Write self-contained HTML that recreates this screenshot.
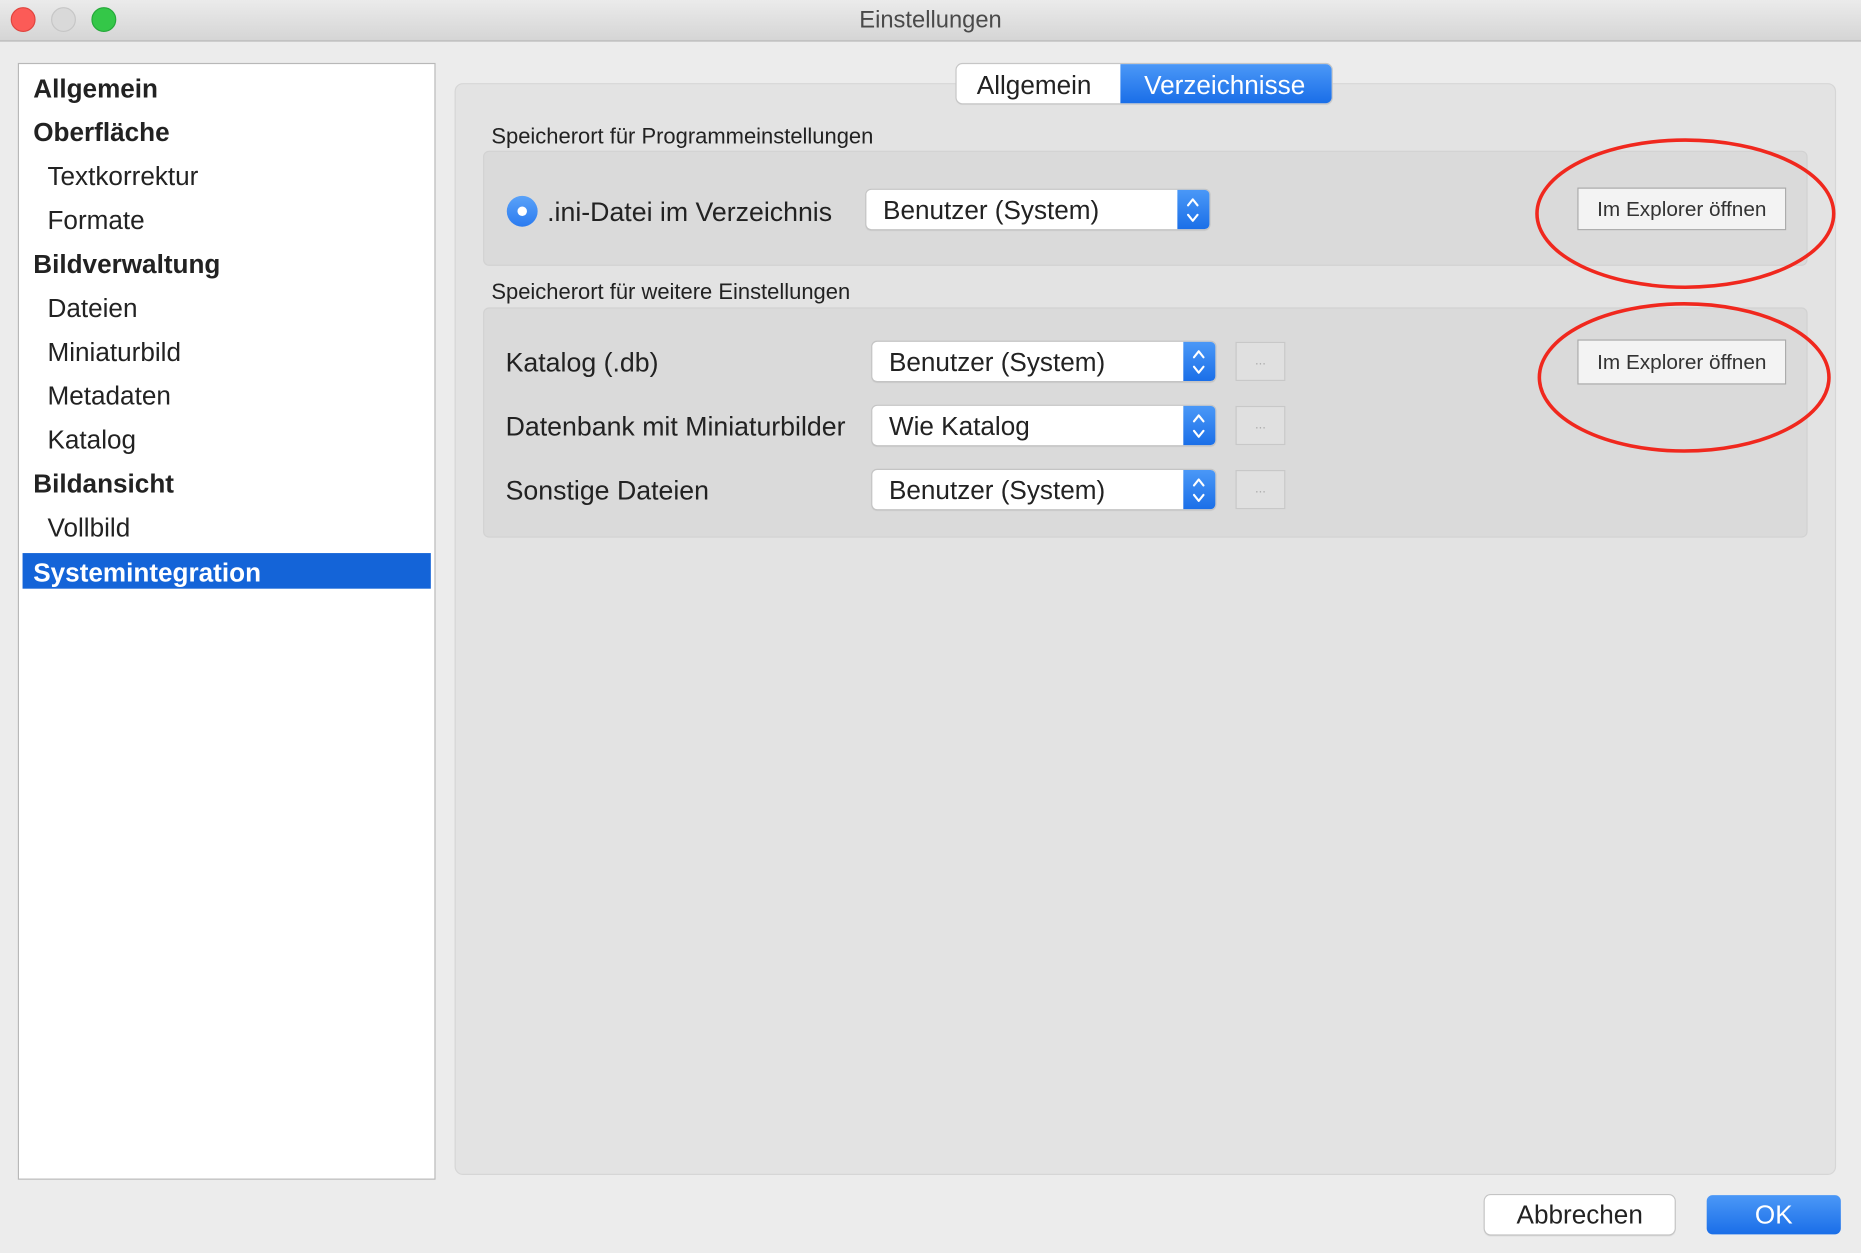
<!DOCTYPE html>
<html><head><meta charset="utf-8"><style>
html,body{margin:0;padding:0;width:1861px;height:1253px;overflow:hidden;background:#ececec;}
#w{position:absolute;left:0;top:0;width:1568px;height:1056px;transform:scale(1.18686);transform-origin:0 0;font-family:"Liberation Sans",sans-serif;color:#222;}
.a{position:absolute;}
.t{position:absolute;white-space:nowrap;line-height:1;}
.side .t{font-size:22px;}
.b{font-weight:bold;}
.combo{position:absolute;background:#fff;border-radius:4px;box-shadow:0 0 0 1px #c4c4c4,0 1px 1px rgba(0,0,0,.15);}
.combo span{position:absolute;left:14px;top:50%;transform:translateY(-48%);font-size:22px;white-space:nowrap;}
.step{position:absolute;right:0;top:0;bottom:0;width:27px;background:linear-gradient(#4a98f7,#1b6fe8);border-radius:0 4px 4px 0;}
.dots{position:absolute;width:42px;height:33px;background:#e0e0e0;border:1px solid #c8c8c8;box-sizing:border-box;color:#aaa;font-size:11px;text-align:center;line-height:30px;}
.btn{position:absolute;background:#f3f3f3;border:1.5px solid #a9a9a9;box-sizing:border-box;font-size:17.5px;text-align:center;color:#333;}
</style></head><body><div id="w">
<div class="a" style="left:0;top:0;width:1568px;height:34px;background:linear-gradient(#ebebeb,#d5d5d5);border-bottom:1px solid #b3b3b3;"></div>
<div class="a" style="left:9px;top:6px;width:21px;height:21px;border-radius:50%;background:#fc5b57;border:1px solid #e0443e;box-sizing:border-box;"></div>
<div class="a" style="left:43px;top:6px;width:21px;height:21px;border-radius:50%;background:#d9d9d9;border:1px solid #c6c6c6;box-sizing:border-box"></div>
<div class="a" style="left:77px;top:6px;width:21px;height:21px;border-radius:50%;background:#34c748;border:1px solid #25a93a;box-sizing:border-box"></div>
<div class="t" style="left:0;width:1568px;text-align:center;top:7px;font-size:20px;color:#4a4a4a;">Einstellungen</div>

<div class="a side" style="left:15px;top:53px;width:352px;height:941px;background:#fff;border:1px solid #b8b8b8;box-sizing:border-box;">
<div class="a" style="left:3px;top:412px;width:344px;height:30px;background:#1464d8;"></div>
<div class="t b" style="left:12px;top:10px;">Allgemein</div>
<div class="t b" style="left:12px;top:47px;">Oberfläche</div>
<div class="t" style="left:24px;top:84px;">Textkorrektur</div>
<div class="t" style="left:24px;top:121px;">Formate</div>
<div class="t b" style="left:12px;top:158px;">Bildverwaltung</div>
<div class="t" style="left:24px;top:195px;">Dateien</div>
<div class="t" style="left:24px;top:232px;">Miniaturbild</div>
<div class="t" style="left:24px;top:269px;">Metadaten</div>
<div class="t" style="left:24px;top:306px;">Katalog</div>
<div class="t b" style="left:12px;top:343px;">Bildansicht</div>
<div class="t" style="left:24px;top:380px;">Vollbild</div>
<div class="t b" style="left:12px;top:418px;color:#fff;">Systemintegration</div>
</div>

<div class="a" style="left:383px;top:70px;width:1164px;height:920px;background:#e3e3e3;border:1px solid #d6d6d6;border-radius:7px;box-sizing:border-box;"></div>
<div class="a" style="left:806px;top:54px;width:316px;height:33px;border-radius:5px;background:#fff;box-shadow:0 0 0 1px #c6c6c6,0 1px 1px rgba(0,0,0,.15);"></div>
<div class="a" style="left:944px;top:54px;width:178px;height:33px;border-radius:0 5px 5px 0;background:linear-gradient(#4b98f7,#1a6ee8);"></div>
<div class="t" style="left:823px;top:61px;font-size:22px;">Allgemein</div>
<div class="t" style="left:964px;top:61px;font-size:22px;color:#fff;">Verzeichnisse</div>

<div class="t" style="left:414px;top:106px;font-size:18.5px;">Speicherort für Programmeinstellungen</div>
<div class="a" style="left:407px;top:127px;width:1116px;height:97px;background:#dadada;border-radius:5px;border:1px solid #d2d2d2;box-sizing:border-box;"></div>
<div class="a" style="left:427px;top:165px;width:26px;height:26px;border-radius:50%;background:linear-gradient(#5aa2f8,#2b7bf0);"></div>
<div class="a" style="left:436px;top:174px;width:8px;height:8px;border-radius:50%;background:#fff;"></div>
<div class="t" style="left:461px;top:168px;font-size:22.5px;">.ini-Datei im Verzeichnis</div>
<div class="combo" style="left:730px;top:160px;width:289px;height:33px;"><span>Benutzer (System)</span><div class="step"></div></div>
<div class="btn" style="left:1329px;top:158px;width:176px;height:36px;line-height:35px;">Im Explorer öffnen</div>

<div class="t" style="left:414px;top:237px;font-size:18.5px;">Speicherort für weitere Einstellungen</div>
<div class="a" style="left:407px;top:259px;width:1116px;height:194px;background:#dadada;border-radius:5px;border:1px solid #d2d2d2;box-sizing:border-box;"></div>
<div class="t" style="left:426px;top:295px;font-size:22.5px;">Katalog (.db)</div>
<div class="t" style="left:426px;top:349px;font-size:22.5px;">Datenbank mit Miniaturbilder</div>
<div class="t" style="left:426px;top:403px;font-size:22.5px;">Sonstige Dateien</div>
<div class="combo" style="left:735px;top:288px;width:289px;height:33px;"><span>Benutzer (System)</span><div class="step"></div></div>
<div class="combo" style="left:735px;top:342px;width:289px;height:33px;"><span>Wie Katalog</span><div class="step"></div></div>
<div class="combo" style="left:735px;top:396px;width:289px;height:33px;"><span>Benutzer (System)</span><div class="step"></div></div>
<div class="dots" style="left:1041px;top:288px;">...</div>
<div class="dots" style="left:1041px;top:342px;">...</div>
<div class="dots" style="left:1041px;top:396px;">...</div>
<div class="btn" style="left:1329px;top:286px;width:176px;height:38px;line-height:37px;">Im Explorer öffnen</div>

<svg class="a" style="left:0;top:0" width="1568" height="1056">
<g fill="none" stroke="#fff" stroke-width="1.8" stroke-linecap="round" stroke-linejoin="round">
<path d="M1001 173l4-5 4 5M1001 181l4 5 4-5"/>
<path d="M1006 301l4-5 4 5M1006 309l4 5 4-5"/>
<path d="M1006 355l4-5 4 5M1006 363l4 5 4-5"/>
<path d="M1006 409l4-5 4 5M1006 417l4 5 4-5"/>
</g>
<ellipse cx="1420" cy="180" rx="125" ry="62" fill="none" stroke="#f0281e" stroke-width="3"/>
<ellipse cx="1419" cy="318" rx="122" ry="62" fill="none" stroke="#f0281e" stroke-width="3"/>
</svg>

<div class="a" style="left:1251px;top:1007px;width:160px;height:33px;background:#fff;border-radius:5px;box-shadow:0 0 0 1px #c4c4c4,0 1px 1px rgba(0,0,0,.15);text-align:center;line-height:34px;font-size:22px;">Abbrechen</div>
<div class="a" style="left:1438px;top:1007px;width:113px;height:33px;background:linear-gradient(#4b98f7,#1a6ee8);border-radius:5px;text-align:center;line-height:34px;font-size:22px;color:#fff;">OK</div>
</div></body></html>
